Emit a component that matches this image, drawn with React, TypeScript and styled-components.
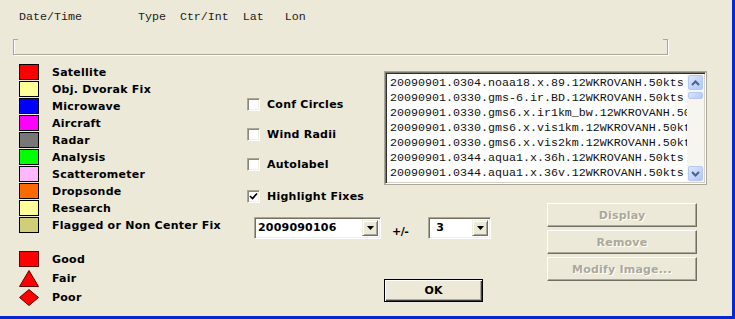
import React from "react";
import styled, { createGlobalStyle } from "styled-components";

const Global = createGlobalStyle`
  html, body { margin: 0; padding: 0; background: #ECE9D8; }
  body { width: 735px; height: 319px; overflow: hidden; }
  * { box-sizing: border-box; }
`;

const Window = styled.div`
  width: 735px;
  height: 319px;
  background: #ECE9D8;
  border-right: 3px solid #0627D2;
  border-bottom: 3px solid #0627D2;
  display: flex;
  flex-direction: column;
  font-family: "DejaVu Sans", "Liberation Sans", sans-serif;
  overflow: hidden;
`;

const ColumnHeader = styled.div`
  font-family: "Liberation Mono", monospace;
  font-size: 11.67px;
  line-height: 14px;
  height: 24px;
  color: #1c1c1c;
  white-space: pre;
  padding: 10px 0 0 19px;
`;

const EtchedBar = styled.div`
  position: relative;
  margin: 15px 0 0 13px;
  width: 655px;
  height: 16px;
  border-left: 1px solid #ACA899;
  border-right: 1px solid #ACA899;
  border-bottom: 1px solid #ACA899;
  box-shadow: 1px 1px 0 #fff, inset 1px 0 0 #fff;
  &::before,
  &::after {
    content: "";
    position: absolute;
    top: 0;
    width: 4px;
    height: 1px;
    background: #ACA899;
  }
  &::before { left: 0; }
  &::after { right: 0; }
`;

const Body = styled.div`
  display: flex;
  flex: 1;
`;

const Legend = styled.div`
  width: 228px;
  margin-left: 19px;
  padding-top: 9px;
  display: flex;
  flex-direction: column;
`;

const LegendList = styled.div`
  display: flex;
  flex-direction: column;
  gap: 1px;
`;

const LegendRow = styled.div<{ $h?: number }>`
  display: flex;
  align-items: center;
  gap: 13px;
  height: ${(p) => p.$h ?? 16}px;
  font-size: 11px;
  font-weight: bold;
  letter-spacing: 0.25px;
  color: #000;
  white-space: nowrap;
`;

const Swatch = styled.div<{ $c: string }>`
  width: 20px;
  height: 16px;
  flex: none;
  border: 1px solid #000;
  background: ${(p) => p.$c};
`;

const QualityList = styled.div`
  margin-top: 18px;
  display: flex;
  flex-direction: column;
  gap: 2px;
`;

const MarkerSvg = styled.svg`
  flex: none;
  display: block;
`;

const RightGrid = styled.div`
  margin-top: 17px;
  display: grid;
  grid-template-columns: 138px 162px 159px;
  grid-template-rows: 112px 19px 76px 23px;
`;

const CheckColumn = styled.div`
  grid-column: 1;
  grid-row: 1 / span 2;
  padding-top: 26px;
  display: flex;
  flex-direction: column;
`;

const CheckRow = styled.label<{ $gap: number }>`
  display: flex;
  align-items: center;
  gap: 7px;
  height: 14px;
  margin-top: ${(p) => p.$gap}px;
  font-size: 11px;
  font-weight: bold;
  letter-spacing: 0.25px;
  color: #000;
  white-space: nowrap;
`;

const CheckBox = styled.span`
  width: 13px;
  height: 13px;
  flex: none;
  background: #fff;
  border-top: 1px solid #ACA899;
  border-left: 1px solid #ACA899;
  border-right: 1px solid #fff;
  border-bottom: 1px solid #fff;
  box-shadow: inset 1px 1px 0 #8a877c, inset -1px -1px 0 #F1EFE2;
  display: flex;
  align-items: center;
  justify-content: center;
`;

const ListBox = styled.div`
  grid-column: 2 / span 2;
  grid-row: 1;
  display: flex;
  border-top: 1px solid #7a786f;
  border-left: 1px solid #7a786f;
  border-right: 1px solid #fff;
  border-bottom: 1px solid #fff;
  box-shadow: inset 1px 1px 0 #2e2e2e, inset -1px -1px 0 #d4d0c8;
  padding: 1px;
  outline: 1px solid #ACA899;
`;

const ListItems = styled.div`
  flex: 1;
  background: #fff;
  padding: 2px 0 0 3px;
  overflow: hidden;
  font-family: "Liberation Mono", monospace;
  font-size: 11.67px;
  line-height: 15px;
  color: #111;
  white-space: pre;
`;

const ListItem = styled.div`
  height: 15px;
  overflow: hidden;
`;

const ScrollTrack = styled.div`
  width: 17px;
  flex: none;
  background: #F6F5F0;
  display: flex;
  flex-direction: column;
  padding: 1px 1px;
  gap: 2px;
`;

const ScrollButton = styled.div<{ $h?: number }>`
  height: ${(p) => p.$h ?? 15}px;
  border: 1px solid #B4C8F6;
  border-radius: 2px;
  background: linear-gradient(135deg, #DCE6FD 0%, #C2D3FB 60%, #B3C6F6 100%);
  display: flex;
  align-items: center;
  justify-content: center;
`;

const ScrollSpacer = styled.div`
  flex: 1;
`;

const ComboRow = styled.div`
  grid-column: 1 / span 2;
  grid-row: 3;
  margin: 14px 0 0 7px;
  display: flex;
  align-items: flex-start;
`;

const Combo = styled.div<{ $w: number; $pad?: number }>`
  width: ${(p) => p.$w}px;
  height: 22px;
  display: flex;
  background: #fff;
  border-top: 1px solid #ACA899;
  border-left: 1px solid #ACA899;
  border-right: 1px solid #fff;
  border-bottom: 1px solid #fff;
  box-shadow: inset 1px 1px 0 #716F64, inset -1px -1px 0 #F1EFE2;
  padding: 2px 2px 2px ${(p) => p.$pad ?? 2}px;
`;

const ComboText = styled.div`
  flex: 1;
  padding-left: 1px;
  font-size: 11px;
  font-weight: bold;
  letter-spacing: 0.2px;
  line-height: 16px;
  color: #000;
`;

const DropButton = styled.div`
  width: 16px;
  flex: none;
  background: #ECE9D8;
  border-top: 1px solid #F1EFE2;
  border-left: 1px solid #F1EFE2;
  border-right: 1px solid #716F64;
  border-bottom: 1px solid #716F64;
  box-shadow: inset 1px 1px 0 #fff, inset -1px -1px 0 #ACA899;
  display: flex;
  align-items: center;
  justify-content: center;
`;

const PlusMinus = styled.div`
  margin: 8px 20px 0 11px;
  font-size: 11px;
  font-weight: bold;
  letter-spacing: -0.5px;
  color: #000;
`;

const OkButton = styled.button`
  grid-column: 2;
  grid-row: 4;
  width: 99px;
  height: 23px;
  margin: 0 0 0 -1px;
  padding: 0;
  background: #ECE9D8;
  border: 1px solid #000;
  box-shadow: inset 1px 1px 0 #fff, inset -1px -1px 0 #404040, inset -2px -2px 0 #ACA899;
  font-family: "DejaVu Sans", sans-serif;
  font-size: 11px;
  font-weight: bold;
  color: #000;
`;

const ActionColumn = styled.div`
  grid-column: 3;
  grid-row: 3 / span 2;
  display: flex;
  flex-direction: column;
  gap: 3px;
`;

const DisabledButton = styled.button`
  width: 150px;
  height: 24px;
  margin: 0;
  padding: 0;
  background: #ECE9D8;
  border-top: 1px solid #fff;
  border-left: 1px solid #fff;
  border-right: 1px solid #716F64;
  border-bottom: 1px solid #716F64;
  box-shadow: inset -1px -1px 0 #ACA899;
  font-family: "DejaVu Sans", sans-serif;
  font-size: 11px;
  font-weight: bold;
  letter-spacing: 0.2px;
  color: #ACA899;
  text-shadow: 1px 1px 0 #fff;
`;

const legend = [
  { c: "#FF0000", t: "Satellite" },
  { c: "#FFFF99", t: "Obj. Dvorak Fix" },
  { c: "#0000FF", t: "Microwave" },
  { c: "#FF00FF", t: "Aircraft" },
  { c: "#777777", t: "Radar" },
  { c: "#00FF00", t: "Analysis" },
  { c: "#FFB8FF", t: "Scatterometer" },
  { c: "#FF6A00", t: "Dropsonde" },
  { c: "#FFFF99", t: "Research" },
  { c: "#D0CF78", t: "Flagged or Non Center Fix" },
];

const files = [
  "20090901.0304.noaa18.x.89.12WKROVANH.50kts",
  "20090901.0330.gms-6.ir.BD.12WKROVANH.50kts",
  "20090901.0330.gms6.x.ir1km_bw.12WKROVANH.50kts",
  "20090901.0330.gms6.x.vis1km.12WKROVANH.50kts",
  "20090901.0330.gms6.x.vis2km.12WKROVANH.50kts",
  "20090901.0344.aqua1.x.36h.12WKROVANH.50kts",
  "20090901.0344.aqua1.x.36v.12WKROVANH.50kts",
];

const checks = [
  { t: "Conf Circles", gap: 0, on: false },
  { t: "Wind Radii", gap: 16, on: false },
  { t: "Autolabel", gap: 16, on: false },
  { t: "Highlight Fixes", gap: 18, on: true },
];

const Arrow = () => (
  <svg width="7" height="4" viewBox="0 0 7 4">
    <polygon points="0,0 7,0 3.5,4" fill="#000" />
  </svg>
);

const Chevron = ({ up }: { up?: boolean }) => (
  <svg width="9" height="6" viewBox="0 0 9 6">
    <polyline
      points={up ? "1,5 4.5,1.5 8,5" : "1,1 4.5,4.5 8,1"}
      fill="none"
      stroke="#4D6185"
      strokeWidth="2"
    />
  </svg>
);

export default function App() {
  return (
    <>
      <Global />
      <Window>
        <ColumnHeader>{"Date/Time        Type  Ctr/Int  Lat   Lon"}</ColumnHeader>
        <EtchedBar />
        <Body>
          <Legend>
            <LegendList>
              {legend.map((l) => (
                <LegendRow key={l.t}>
                  <Swatch $c={l.c} />
                  {l.t}
                </LegendRow>
              ))}
            </LegendList>
            <QualityList>
              <LegendRow $h={17}>
                <MarkerSvg width="20" height="17" viewBox="0 0 20 17">
                  <rect x="0.5" y="0.5" width="19" height="15" fill="#FF0000" stroke="#600" />
                </MarkerSvg>
                Good
              </LegendRow>
              <LegendRow $h={17}>
                <MarkerSvg width="20" height="17" viewBox="0 0 20 17">
                  <polygon points="10,0.5 19.5,16.5 0.5,16.5" fill="#FF0000" stroke="#600" />
                </MarkerSvg>
                Fair
              </LegendRow>
              <LegendRow $h={17}>
                <MarkerSvg width="20" height="17" viewBox="0 0 20 17">
                  <polygon points="10,0.5 19.5,8.5 10,16.5 0.5,8.5" fill="#FF0000" stroke="#600" />
                </MarkerSvg>
                Poor
              </LegendRow>
            </QualityList>
          </Legend>
          <RightGrid>
            <CheckColumn>
              {checks.map((c) => (
                <CheckRow key={c.t} $gap={c.gap}>
                  <CheckBox>
                    {c.on && (
                      <svg width="9" height="9" viewBox="0 0 9 9">
                        <polyline points="1,4 3.5,6.5 8,1.5" fill="none" stroke="#000" strokeWidth="1.7" />
                      </svg>
                    )}
                  </CheckBox>
                  {c.t}
                </CheckRow>
              ))}
            </CheckColumn>
            <ListBox>
              <ListItems>
                {files.map((f, i) => (
                  <ListItem key={i}>{f}</ListItem>
                ))}
              </ListItems>
              <ScrollTrack>
                <ScrollButton>
                  <Chevron up />
                </ScrollButton>
                <ScrollButton $h={7} />
                <ScrollSpacer />
                <ScrollButton>
                  <Chevron />
                </ScrollButton>
              </ScrollTrack>
            </ListBox>
            <ComboRow>
              <Combo $w={127}>
                <ComboText>2009090106</ComboText>
                <DropButton>
                  <Arrow />
                </DropButton>
              </Combo>
              <PlusMinus>+/-</PlusMinus>
              <Combo $w={63} $pad={6}>
                <ComboText>3</ComboText>
                <DropButton>
                  <Arrow />
                </DropButton>
              </Combo>
            </ComboRow>
            <OkButton>OK</OkButton>
            <ActionColumn>
              <DisabledButton disabled>Display</DisabledButton>
              <DisabledButton disabled>Remove</DisabledButton>
              <DisabledButton disabled>Modify Image...</DisabledButton>
            </ActionColumn>
          </RightGrid>
        </Body>
      </Window>
    </>
  );
}
